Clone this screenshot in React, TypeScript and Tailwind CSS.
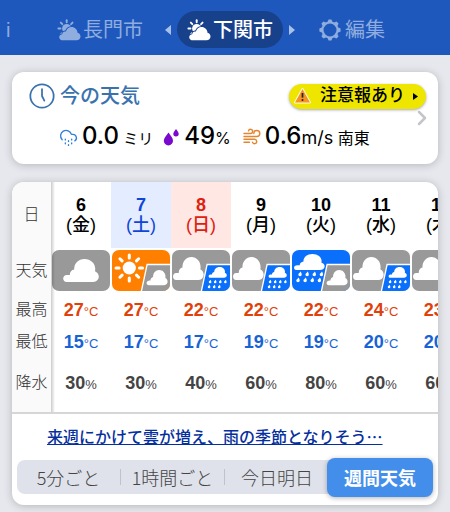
import { ChevronRight, Clock5, CloudDrizzle } from "lucide-react";

type TileKind = "cloud" | "sunCloud" | "cloudRain" | "rainCloud";

type Day = {
  date: string;
  weekday: string;
  tile: TileKind;
  high: number;
  low: number;
  rain: number;
};

const days: Day[] = [
  { date: "6", weekday: "金", tile: "cloud", high: 27, low: 15, rain: 30 },
  { date: "7", weekday: "土", tile: "sunCloud", high: 27, low: 17, rain: 30 },
  { date: "8", weekday: "日", tile: "cloudRain", high: 22, low: 17, rain: 40 },
  { date: "9", weekday: "月", tile: "cloudRain", high: 22, low: 19, rain: 60 },
  { date: "10", weekday: "火", tile: "rainCloud", high: 22, low: 19, rain: 80 },
  { date: "11", weekday: "水", tile: "cloudRain", high: 24, low: 20, rain: 60 },
  { date: "12", weekday: "木", tile: "cloudRain", high: 23, low: 20, rain: 60 },
];

const tabs = ["5分ごと", "1時間ごと", "今日明日", "週間天気"];

const tileNames: Record<TileKind, string> = {
  cloud: "くもり",
  sunCloud: "晴れのちくもり",
  cloudRain: "くもりのち雨",
  rainCloud: "雨のちくもり",
};

const GRAY = "#999999";
const BLUE = "#0a6ffa";
const ORANGE = "#ff8000";

// 35 x 23 cloud, placed with a transform
function Cloud({ transform }: { transform: string }) {
  return (
    <path
      transform={transform}
      fill="#fff"
      d="M3.5 23C1.3 23 0 21.5 0 19.6 0 17.700 1.500 16.200 3.600 16.100 4.500 16 5.500 15.800 6.500 16 6.500 13 8.300 11 10.800 10.600 10.600 4.500 15 0 21 0c6 0 10.500 4.400 10.500 10 0 .8-.1 1.500-.3 2.200C33.600 13.200 35 15.300 35 17.600 35 20.700 32.700 23 29.500 23Z"
    />
  );
}

function Drop({ x, y, s = 1 }: { x: number; y: number; s?: number }) {
  return (
    <path
      transform={`translate(${x} ${y}) scale(${s})`}
      fill="#fff"
      d="M.5-2.400C1.200-1 1.600-.2 1.600.6a1.700 1.700 0 0 1-3.400 0C-1.800-.3-.5-1 .5-2.400Z"
    />
  );
}

function WeatherTile({ kind, id }: { kind: TileKind; id: string }) {
  const base = kind === "sunCloud" ? ORANGE : kind === "rainCloud" ? BLUE : GRAY;
  const panel = kind === "cloudRain" ? BLUE : GRAY;
  return (
    <svg
      width="58"
      height="41"
      viewBox="0 0 57 41"
      preserveAspectRatio="none"
      className="mx-auto block"
      role="img"
      aria-label={tileNames[kind]}
    >
      <clipPath id={id}>
        <rect width="57" height="41" rx="7" />
      </clipPath>
      <g clipPath={`url(#${id})`}>
        <rect width="57" height="41" fill={base} />
        {kind === "cloud" && <Cloud transform="translate(11 9)" />}
        {kind === "cloudRain" && (
          <Cloud transform="translate(1 7) scale(.86 1)" />
        )}
        {kind === "sunCloud" && (
          <g stroke="#fff" strokeWidth="3" strokeLinecap="round">
            <circle cx="17" cy="18" r="6.500" fill="#fff" stroke="none" />
            {[0, 45, 90, 135, 180, 225, 270, 315].map((a) => (
              <path key={a} d="M17 8V5" transform={`rotate(${a} 17 18)`} />
            ))}
          </g>
        )}
        {kind === "rainCloud" && (
          <>
            <Cloud transform="translate(2 4) scale(.86 .7)" />
            {[0, 1, 2, 3].map((i) => (
              <Drop key={i} x={8 + i * 7} y={24} />
            ))}
            {[0, 1, 2, 3].map((i) => (
              <Drop key={i} x={6 + i * 7} y={30} />
            ))}
          </>
        )}
        {kind !== "cloud" && (
          <path
            d="M28.500 43 34.500 14.500H60V43Z"
            fill={panel}
            stroke="#fff"
            strokeWidth="1.300"
          />
        )}
        {(kind === "sunCloud" || kind === "rainCloud") && (
          <Cloud transform="translate(34 20) scale(.59 .66)" />
        )}
        {kind === "cloudRain" && (
          <>
            <Cloud transform="translate(36 17) scale(.51 .47)" />
            {[0, 1, 2, 3].map((i) => (
              <Drop key={i} x={37.500 + i * 5} y={31.500} s={0.75} />
            ))}
            {[0, 1, 2].map((i) => (
              <Drop key={i} x={36.500 + i * 5} y={36.500} s={0.75} />
            ))}
          </>
        )}
      </g>
    </svg>
  );
}

function SunCloudIcon({ cut }: { cut: string }) {
  return (
    <svg width="24" height="22" viewBox="0 0 24 22" className="shrink-0">
      <circle cx="9.700" cy="9.500" r="4.600" fill="currentColor" />
      <g stroke="currentColor" strokeWidth="1.900" strokeLinecap="round">
        {[-135, -90, -45, 0, 45].map((a) => (
          <path
            key={a}
            d="M9.700 3.300V1.200"
            transform={`rotate(${a} 9.700 9.500)`}
          />
        ))}
      </g>
      <path
        d="M6 21.300c-2.200 0-3.800-1.200-3.800-3.100 0-1.700 1.300-2.900 3-3 .1-2 1.900-3.200 3.700-2.700C9.600 9.800 11.800 8 14.500 8c3.300 0 5.900 2.500 6 5.700 1.800.5 3 1.900 3 3.700 0 2.300-1.700 3.900-4 3.900Z"
        fill="currentColor"
        stroke={cut}
        strokeWidth="1.600"
        paintOrder="stroke"
      />
    </svg>
  );
}

function GearIcon() {
  return (
    <svg width="22" height="22" viewBox="0 0 22 22" className="shrink-0">
      <circle
        cx="11"
        cy="11"
        r="7.500"
        fill="none"
        stroke="currentColor"
        strokeWidth="2"
      />
      {[0, 45, 90, 135, 180, 225, 270, 315].map((a) => (
        <path
          key={a}
          d="M8.300 3.400 9.600.4h2.800l1.300 3Z"
          fill="currentColor"
          transform={`rotate(${a} 11 11)`}
        />
      ))}
    </svg>
  );
}

function DropsIcon() {
  return (
    <svg width="17" height="18" viewBox="0 0 17 18" className="shrink-0" fill="#7a08cf">
      <path d="M5.500 4.500C7.500 7.500 10 10 10 12.800a4.600 4.600 0 0 1-9.200 0C.8 10 3.500 7.500 5.500 4.500Z" />
      <path d="M13 1c1.200 1.800 2.700 3.200 2.700 4.800a2.700 2.700 0 0 1-5.400 0C10.300 4.200 11.900 2.800 13 1Z" />
    </svg>
  );
}

function WindIcon() {
  return (
    <svg
      width="18"
      height="18"
      viewBox="0 0 18 18"
      className="shrink-0"
      fill="none"
      stroke="#e5852f"
      strokeWidth="1.400"
      strokeLinecap="round"
    >
      <path d="M1 5.500h6.500a2.100 2.100 0 1 0-2-2.600" />
      <path d="M1 8.500h12.800a3 3 0 1 0-3-3" />
      <path d="M1 11.300h10.400a2.200 2.200 0 1 1-2 2.800" />
      <path d="M1 14.300h5.500" />
    </svg>
  );
}

function WarningIcon() {
  return (
    <svg width="19" height="18" viewBox="0 0 19 18" className="shrink-0">
      <path
        d="M9.500 2 17 15.500H2Z"
        fill="#f59322"
        stroke="#fffbe0"
        strokeWidth="2"
        strokeLinejoin="round"
        paintOrder="stroke"
      />
      <path d="M9.500 6v4.600" stroke="#222" strokeWidth="1.700" />
      <circle cx="9.500" cy="13" r="1" fill="#222" />
    </svg>
  );
}

function Arrow({ left = false }: { left?: boolean }) {
  return (
    <svg width="6" height="10" viewBox="0 0 6 10" fill="currentColor" className="shrink-0">
      <path d={left ? "M6 0v10L0 5Z" : "M0 0v10l6-5Z"} />
    </svg>
  );
}

function dateColor(weekday: string) {
  if (weekday === "土") return "bg-[#e4edff] text-[#0f46d8]";
  if (weekday === "日") return "bg-[#ffe8e4] text-[#e0200f]";
  return "text-black";
}

// the gradient strip is the shadow that the fixed column casts on the days
const labelCell =
  "sticky left-0 z-10 w-[39px] bg-[#fafafa] p-0 text-base font-light text-[#333] after:absolute after:inset-y-0 after:left-full after:w-1 after:bg-linear-to-r after:from-black/20 after:to-transparent after:content-['']";

export default function App() {
  return (
    <div className="min-h-screen overflow-hidden bg-[#e6e8ed] pb-2 font-['Liberation_Sans','Noto_Sans_CJK_JP',sans-serif]">
      <nav className="flex h-[55px] items-center overflow-hidden bg-[#1f58bd] pt-1 text-xl whitespace-nowrap text-[#8fadde]">
        <button className="w-[57px] shrink-0 pl-[6px] text-left">i</button>
        <button className="flex shrink-0 items-center gap-0.5">
          <SunCloudIcon cut="#1f58bd" />
          長門市
        </button>
        <span className="ml-[22px] text-[#a9c0e8]">
          <Arrow left />
        </span>
        <button
          aria-current="page"
          className="mx-[6px] flex h-[37px] shrink-0 items-center gap-0.5 rounded-full bg-[#18418c] px-[10px] font-medium text-white"
        >
          <SunCloudIcon cut="#18418c" />
          下関市
        </button>
        <span className="text-[#a9c0e8]">
          <Arrow />
        </span>
        <button className="ml-6 flex shrink-0 items-center gap-1">
          <GearIcon />
          編集
        </button>
      </nav>

      <main className="flex flex-col gap-[18px] px-3 pt-[17px]">
        <section className="relative rounded-xl bg-white pt-[10px] pb-[10px] shadow-[0_1px_8px_rgba(0,0,0,0.22)]">
          <div className="flex items-center justify-between pr-3 pl-4">
            <h2 className="flex items-center gap-1 text-xl leading-7 font-medium text-[#3a72ae]">
              <Clock5 size={28} strokeWidth={1.5} />
              今の天気
            </h2>
            <button className="flex h-[25px] items-center rounded-full bg-[#efe600] pr-2 pl-1 text-[17px] font-medium whitespace-nowrap text-black shadow-[0_1px_3px_rgba(0,0,0,0.35)]">
              <WarningIcon />
              <span className="mr-2 ml-2">注意報あり</span>
              <svg width="5" height="7" viewBox="0 0 5 7">
                <path d="M0 0v7l5-3.500Z" />
              </svg>
            </button>
          </div>
          <div className="mt-[10px] flex h-[34px] items-center pl-[47px] leading-[30px] whitespace-nowrap text-black">
            <CloudDrizzle
              size={19}
              strokeWidth={1.7}
              className="mr-1 shrink-0 text-[#2f80d8]"
            />
            <span className="font-['Inter','Noto_Sans_CJK_JP',sans-serif] text-[15px]">
              <span className="text-2xl leading-[30px] font-medium">0.0</span> ミリ
            </span>
            <span className="mr-1 ml-[10px]">
              <DropsIcon />
            </span>
            <span className="font-['Inter',sans-serif] text-base leading-[30px]">
              <span className="text-2xl leading-[30px] font-medium">49</span>%
            </span>
            <span className="mr-1 ml-3">
              <WindIcon />
            </span>
            <span className="font-['Inter','Noto_Sans_CJK_JP',sans-serif] text-base leading-[30px]">
              <span className="text-2xl leading-[30px] font-medium">0.6</span>
              <span className="text-lg leading-[30px]">m/s</span> 南東
            </span>
          </div>
          <ChevronRight
            size={24}
            strokeWidth={2.5}
            className="absolute top-[34px] right-1 text-[#c4c5ca]"
          />
        </section>

        <section className="overflow-hidden rounded-xl bg-white shadow-[0_1px_8px_rgba(0,0,0,0.22)]">
          <div className="overflow-x-auto [scrollbar-width:none]">
            <table className="w-[459px] table-fixed border-separate border-spacing-0 text-center text-lg">
              <thead>
                <tr className="h-[66px]">
                  <th scope="row" className={labelCell}>
                    日
                  </th>
                  {days.map((d) => (
                    <th
                      key={d.date}
                      scope="col"
                      className={`w-[60px] p-0 leading-5 font-bold ${dateColor(d.weekday)}`}
                    >
                      {d.date}
                      <br />
                      <span className="font-medium">({d.weekday})</span>
                    </th>
                  ))}
                </tr>
              </thead>
              <tbody>
                <tr className="h-[45px]">
                  <th scope="row" className={labelCell}>
                    天気
                  </th>
                  {days.map((d) => (
                    <td key={d.date} className="p-0">
                      <WeatherTile kind={d.tile} id={`tile-${d.date}`} />
                    </td>
                  ))}
                </tr>
                <tr className="h-[33px]">
                  <th scope="row" className={labelCell}>
                    最高
                  </th>
                  {days.map((d) => (
                    <td key={d.date} className="p-0 text-[#e04009]">
                      <span className="font-bold">{d.high}</span>
                      <span className="text-[13px]">°C</span>
                    </td>
                  ))}
                </tr>
                <tr className="h-[31px]">
                  <th scope="row" className={labelCell}>
                    最低
                  </th>
                  {days.map((d) => (
                    <td key={d.date} className="p-0 text-[#1763d6]">
                      <span className="font-bold">{d.low}</span>
                      <span className="text-[13px]">°C</span>
                    </td>
                  ))}
                </tr>
                <tr className="h-[55px]">
                  <th scope="row" className={`${labelCell} pb-[3px]`}>
                    降水
                  </th>
                  {days.map((d) => (
                    <td key={d.date} className="p-0 pb-[3px] text-[#444]">
                      <span className="font-bold">{d.rain}</span>
                      <span className="text-[13px]">%</span>
                    </td>
                  ))}
                </tr>
              </tbody>
            </table>
          </div>

          <div className="border-t-2 border-[#d6d6d8] px-[5px] pt-[10px] pb-[11px] font-['Noto_Sans_CJK_JP',sans-serif]">
            <a
              href="#"
              className="ml-[30px] block text-base leading-6 font-medium whitespace-nowrap text-[#062f9e] underline"
            >
              来週にかけて雲が増え、雨の季節となりそう…
            </a>
            <div className="mt-3 grid h-[34px] grid-cols-4 items-center rounded-lg bg-[#dfe2ea] text-lg whitespace-nowrap text-[#444]">
              {tabs.map((tab, i) =>
                i === 3 ? (
                  <button
                    key={tab}
                    aria-pressed="true"
                    className="-my-1 -ml-0.5 h-[39px] rounded-lg bg-[#428eea] font-bold text-white shadow-[0_1px_5px_rgba(0,0,0,0.3)]"
                  >
                    {tab}
                  </button>
                ) : (
                  <button
                    key={tab}
                    aria-pressed="false"
                    className={`h-4 leading-4 font-light ${i < 2 ? "border-r border-[#bfc3cc]" : ""}`}
                  >
                    {tab}
                  </button>
                ),
              )}
            </div>
          </div>
        </section>
      </main>
    </div>
  );
}
